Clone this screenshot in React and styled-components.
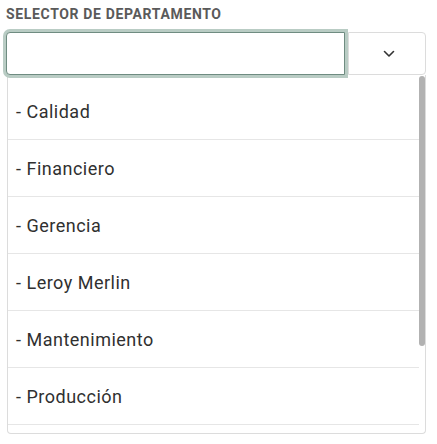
import React from "react"
import styled, { createGlobalStyle } from "styled-components"

const GlobalStyle = createGlobalStyle`
    html, body {
        margin: 0;
        padding: 0;
        background: #ffffff;
        font-family: Roboto, "Noto Sans", sans-serif;
    }
`

const Wrapper = styled.div`
    padding: 6px 6px 0 6px;
    width: 420px;
`

const Label = styled.div`
    font-size: 14px;
    font-weight: 700;
    color: #5a5a5a;
    letter-spacing: 0.65px;
    text-transform: uppercase;
    line-height: 16px;
    margin-bottom: 10px;
`

const InputGroup = styled.div`
    display: flex;
    height: 43px;
`

const Input = styled.input`
    flex: 1;
    min-width: 0;
    box-sizing: border-box;
    height: 43px;
    border: 1px solid #6f8c81;
    border-radius: 4px 0 0 4px;
    box-shadow: 0 0 0 3px #b9ccc4;
    outline: none;
    padding: 0 10px;
    font-size: 16px;
    font-family: inherit;
    position: relative;
    z-index: 1;
`

const ToggleButton = styled.button`
    width: 78px;
    box-sizing: border-box;
    height: 43px;
    margin-left: 3px;
    border: 1px solid #dcdcdc;
    border-radius: 0 4px 4px 0;
    background: #ffffff;
    display: flex;
    align-items: center;
    justify-content: center;
    padding: 0 0 0 3px;
    cursor: pointer;
`

const ListBox = styled.div`
    position: relative;
    margin-left: 1px;
    height: 359px;
    box-sizing: border-box;
    border: 1px solid #dcdcdc;
    border-top: none;
    border-radius: 0 0 4px 4px;
    overflow: hidden;
`

const List = styled.ul`
    list-style: none;
    margin: 0 6px 0 0;
    padding: 8px 0;
`

const ScrollThumb = styled.div`
    position: absolute;
    top: 1px;
    right: 0;
    width: 6px;
    height: ${props => props.size}px;
    background: #b2b2b2;
    border-radius: 3px;
`

const Item = styled.li`
    height: 57px;
    box-sizing: border-box;
    display: flex;
    align-items: center;
    padding: 0 8px;
    border-bottom: 1px solid #e6e6e6;
    font-size: 18px;
    letter-spacing: 0.5px;
    color: #303030;
    cursor: pointer;
`

const departments = [
    "Calidad",
    "Financiero",
    "Gerencia",
    "Leroy Merlin",
    "Mantenimiento",
    "Producción"
]

const Chevron = () =>
    <svg width="12" height="8" viewBox="0 0 12 8" fill="none">
        <path d="M1.5 1.5 L6 6 L10.5 1.5" stroke="#333" strokeWidth="1.6" strokeLinecap="round" strokeLinejoin="round" />
    </svg>

const App = () =>
    <Wrapper>
        <GlobalStyle />
        <Label>Selector de departamento</Label>
        <InputGroup>
            <Input type="text" />
            <ToggleButton type="button">
                <Chevron />
            </ToggleButton>
        </InputGroup>
        <ListBox>
            <List>
                {departments.map(name =>
                    <Item key={name}>- {name}</Item>
                )}
            </List>
            <ScrollThumb size={270} />
        </ListBox>
    </Wrapper>

export default App
